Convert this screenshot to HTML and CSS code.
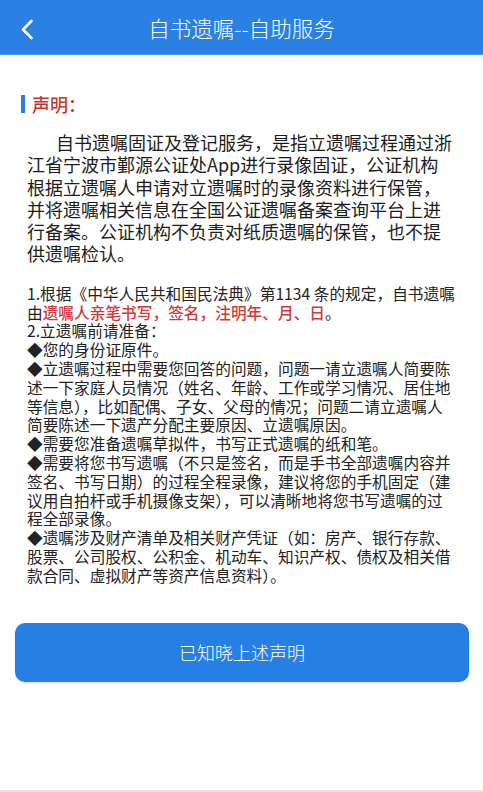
FILE: index.html
```html
<!DOCTYPE html>
<html lang="zh-CN">
<head>
<meta charset="utf-8">
<title>自书遗嘱--自助服务</title>
<link rel="stylesheet" href="styles.css">
</head>
<body>
<div class="page">
  <header class="navbar">
    <button class="back" aria-label="返回">
      <svg width="14" height="22" viewBox="0 0 14 22"><polyline points="11.5,2 3,10.5 11.5,19" fill="none" stroke="#fff" stroke-width="2.6" stroke-linecap="round" stroke-linejoin="round"/></svg>
    </button>
    <h1 class="nav-title">自书遗嘱--自助服务</h1>
  </header>

  <main class="content">
    <h2 class="section-title">声明：</h2>
    <p class="intro">自书遗嘱固证及登记服务，是指立遗嘱过程通过浙<br>江省宁波市鄞源公证处App进行录像固证，公证机构<br>根据立遗嘱人申请对立遗嘱时的录像资料进行保管，<br>并将遗嘱相关信息在全国公证遗嘱备案查询平台上进<br>行备案。公证机构不负责对纸质遗嘱的保管，也不提<br>供遗嘱检认。</p>

    <div class="notes">
      <p>1.根据《中华人民共和国民法典》第1134 条的规定，自书遗嘱<br>由<span class="em">遗嘱人亲笔书写，签名，注明年、月、日</span>。</p>
      <p>2.立遗嘱前请准备：</p>
      <p>◆您的身份证原件。</p>
      <p>◆立遗嘱过程中需要您回答的问题，问题一请立遗嘱人简要陈<br>述一下家庭人员情况（姓名、年龄、工作或学习情况、居住地<br>等信息），比如配偶、子女、父母的情况；问题二请立遗嘱人<br>简要陈述一下遗产分配主要原因、立遗嘱原因。</p>
      <p>◆需要您准备遗嘱草拟件，书写正式遗嘱的纸和笔。</p>
      <p>◆需要将您书写遗嘱（不只是签名，而是手书全部遗嘱内容并<br>签名、书写日期）的过程全程录像，建议将您的手机固定（建<br>议用自拍杆或手机摄像支架），可以清晰地将您书写遗嘱的过<br>程全部录像。</p>
      <p>◆遗嘱涉及财产清单及相关财产凭证（如：房产、银行存款、<br>股票、公司股权、公积金、机动车、知识产权、债权及相关借<br>款合同、虚拟财产等资产信息资料）。</p>
    </div>

    <button class="confirm">已知晓上述声明</button>
  </main>

  <div class="bottom-line"></div>
</div>
</body>
</html>
```

FILE: styles.css
```css
* { box-sizing: border-box; }

html, body {
  margin: 0;
  padding: 0;
  background: #fff;
}

body {
  font-family: "Noto Sans CJK SC", "Noto Sans", sans-serif;
  color: #1c1c1c;
}

.page {
  height: 792px;
  display: flex;
  flex-direction: column;
  overflow: hidden;
}

.navbar {
  height: 55px;
  background: #2a80e3;
  display: flex;
  align-items: center;
  justify-content: center;
  position: relative;
  border-bottom: 1px solid #4b98ea;
}

.back {
  position: absolute;
  left: 20px;
  top: 19px;
  width: 14px;
  height: 22px;
  padding: 0;
  border: 0;
  background: none;
  display: flex;
}

.nav-title {
  margin: 0;
  font-size: 21.5px;
  font-weight: 300;
  color: #fff;
  line-height: 55px;
}

.content {
  padding: 0 14px 0 21px;
  display: flex;
  flex-direction: column;
}

.section-title {
  margin: 40px 0 0 0;
  border-left: 4px solid #2a7fe0;
  padding-left: 7px;
  font-size: 18px;
  line-height: 18px;
  font-weight: 500;
  color: #c0392f;
}

.intro {
  margin: 18px 0 0 6px;
  width: 429px;
  font-size: 18px;
  line-height: 22.3px;
  text-indent: 29px;
  color: #1c1c1c;
}

.notes {
  margin: 20px 0 0 6px;
  width: 432px;
  font-size: 15.7px;
  line-height: 18.8px;
  color: #222;
}

.notes p {
  margin: 0;
}

.em {
  color: #d23a3a;
  font-weight: 500;
}

.confirm {
  margin: 37px 0 0 -6px;
  width: 454px;
  height: 59px;
  border: 0;
  border-radius: 10px;
  background: #2680e4;
  color: #fff;
  font-family: inherit;
  font-size: 18px;
  font-weight: 300;
  box-shadow: 0 1px 2px rgba(0, 0, 0, 0.15);
}

.bottom-line {
  margin-top: auto;
  height: 2px;
  background: #e4e4e4;
}
```
